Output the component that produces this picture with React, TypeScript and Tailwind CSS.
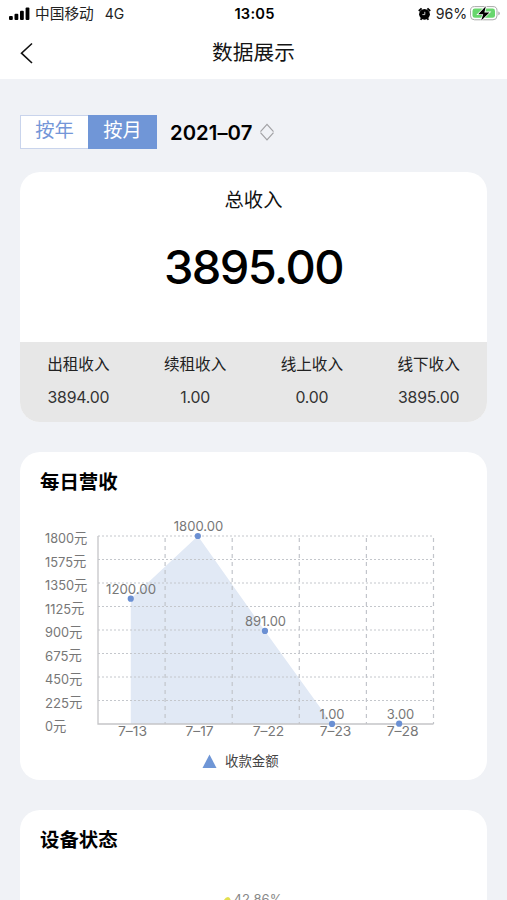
import React from 'react'

const summary = [
  { label: '出租收入', value: '3894.00' },
  { label: '续租收入', value: '1.00' },
  { label: '线上收入', value: '0.00' },
  { label: '线下收入', value: '3895.00' },
]

const daily = [
  { day: '7–13', value: 1200, width: 50, labelX: 131, dayX: 132.5, dayWidth: 29 },
  { day: '7–17', value: 1800, width: 49.5, labelX: 198.5, dayX: 199.5, dayWidth: 28 },
  { day: '7–22', value: 891, width: 41, labelX: 265.5, dayX: 268.5, dayWidth: 31.5 },
  { day: '7–23', value: 1, width: 25, labelX: 332, dayX: 335.5, dayWidth: 31.5 },
  { day: '7–28', value: 3, width: 27.5, labelX: 400.5, dayX: 402.7, dayWidth: 32 },
]

const yLabels = [
  { text: 1800, width: 29 },
  { text: 1575, width: 28 },
  { text: 1350, width: 29 },
  { text: 1125, width: 26 },
  { text: 900, width: 24 },
  { text: 675, width: 23.5 },
  { text: 450, width: 24 },
  { text: 225, width: 24 },
  { text: 0, width: 8 },
]

const LEFT = 98
const RIGHT = 433.5
const TOP = 536
const BOTTOM = 724
const COL = (RIGHT - LEFT) / 5
const ROW = (BOTTOM - TOP) / 8

const StatusBar = () => (
  <div className="flex h-7 items-center pl-2 pr-1.5">
    <div className="flex flex-1 items-center">
      <svg width="22" height="14" viewBox="0 0 22 14">
        <rect x="1" y="9" width="3.8" height="4" rx="1" />
        <rect x="6.5" y="6.7" width="3.8" height="6.3" rx="1" />
        <rect x="12" y="3.8" width="3.8" height="9.2" rx="1" />
        <rect x="17.6" y="0.6" width="3.8" height="12.4" rx="1" />
      </svg>
      <span className="ml-[5px] text-[14.7px] leading-5 text-[#222]">中国移动</span>
      <span className="ml-[11px] text-[14px] leading-5 text-[#222]">4G</span>
    </div>
    <span className="text-[14.7px] font-semibold tracking-[0.2px]">13:05</span>
    <div className="flex flex-1 items-center justify-end">
      <svg width="13" height="14" viewBox="0 0 13 14">
        <path d="M0.8 4 3.6 1.4M12.2 4 9.4 1.4M2.6 12.8l1.2-1.5M10.4 12.8l-1.2-1.5" stroke="#000" strokeWidth="1.8" />
        <circle cx="6.5" cy="7.3" r="5.4" />
        <path d="M6.8 4.8v2.8H4.4" stroke="#ddd" strokeWidth="0.9" fill="none" />
      </svg>
      <span className="ml-[5px] text-[14.2px] tracking-[-0.1px] text-[#222]">96%</span>
      <svg className="ml-[3px]" width="31" height="17" viewBox="0 0 31 17">
        <rect x="0.5" y="1.6" width="26.5" height="13.2" rx="4" fill="#fff" stroke="#a9aaa9" />
        <rect x="2.5" y="3.6" width="22.5" height="9.2" rx="2.4" fill="#68d66d" />
        <path d="M28.3 6.4c2 .6 2 3.3 0 3.9z" fill="#aaa" />
        <path d="M15.8 1.2 8.2 9.2h5l-2 6.2 8.2-8h-5z" stroke="#fff" strokeWidth="1.6" paintOrder="stroke" />
      </svg>
    </div>
  </div>
)

const Header = () => (
  <header className="bg-white">
    <StatusBar />
    <div className="flex h-[51px] items-center px-5 pb-0.5">
      <svg width="14" height="22" viewBox="0 0 14 22" fill="none">
        <path d="M12 1.5 1.5 11.2 12 21" stroke="#111" strokeWidth="1.6" />
      </svg>
      <h1 className="flex-1 text-center text-[20.7px] text-[#151515]">数据展示</h1>
      <div className="w-3.5" />
    </div>
  </header>
)

const RevenueChart = () => {
  const points = daily.map((d, i) => ({
    ...d,
    x: LEFT + COL * (i + 0.5) - 0.8,
    y: BOTTOM - ((BOTTOM - TOP) * d.value) / 1800,
  }))
  const line = points.map((p) => `${p.x},${p.y}`).join(' ')

  return (
    <svg className="block" width="467" height="268" viewBox="20 512 467 268" fontSize="13.3" fill="#777">
      <polygon
        points={`${points[0].x},${BOTTOM} ${line} ${points[4].x},${BOTTOM}`}
        fill="#e1e9f5"
      />
      {yLabels.map((l, i) => (
        <g key={l.text}>
          {i < 8 && (
            <line x1={LEFT} x2={RIGHT} y1={TOP + ROW * i} y2={TOP + ROW * i} stroke="#c4c7cc" strokeDasharray="2 2" />
          )}
          <text x="45" y={543.3 + ROW * i} textLength={l.width} lengthAdjust="spacingAndGlyphs">{l.text}</text>
          <text x={45 + l.width} y={542.5 + ROW * i}>元</text>
        </g>
      ))}
      {points.map((p, i) => (
        <line
          key={p.day}
          x1={LEFT + COL * (i + 1)}
          x2={LEFT + COL * (i + 1)}
          y1={TOP + 2}
          y2={BOTTOM}
          stroke="#c2c5cb"
          strokeWidth="1.2"
          strokeDasharray="4 4"
        />
      ))}
      <path d={`M${LEFT} ${TOP}V${BOTTOM}H${RIGHT}`} fill="none" stroke="#c5c5c8" strokeWidth="1.3" />
      {points.map((p) => (
        <g key={p.day}>
          <circle cx={p.x} cy={p.y} r="3.1" fill="#6b90d3" />
          <text x={p.labelX - p.width / 2} y={p.y - 4.7} textLength={p.width} lengthAdjust="spacingAndGlyphs">
            {p.value.toFixed(2)}
          </text>
          <text x={p.dayX - p.dayWidth / 2} y="736.2" textLength={p.dayWidth} lengthAdjust="spacingAndGlyphs">
            {p.day}
          </text>
        </g>
      ))}
      <path d="M202.5 768 209.5 754.5 216.5 768z" fill="#6f96d6" />
      <text x="225" y="766" fill="#444" fontSize="13.4">收款金额</text>
    </svg>
  )
}

export default function App() {
  return (
    <div className="h-[900px] w-[507px] overflow-hidden bg-[#f0f2f6] font-[Inter,'Noto_Sans_CJK_SC',sans-serif] text-black">
      <Header />
      <main className="px-5 pt-9">
        <div className="flex h-[34px] items-center">
          <div className="flex h-[34px] w-[137px] border border-[#c9d4ec] text-[19.3px] leading-[28px]">
            <button className="w-[67px] bg-white pb-1 text-[#7496d8]">按年</button>
            <button className="-my-px -mr-px flex-1 bg-[#7096d7] pb-1 text-white">按月</button>
          </div>
          <span className="ml-[13px] pt-0.5 text-[20.3px] font-semibold tracking-[0.05px]">2021–07</span>
          <svg className="ml-[7px]" width="16" height="18" viewBox="0 0 16 18" fill="none" stroke="#a2a2a5" strokeWidth="1.2">
            <path d="M1.5 8.7 8 1.4l6.5 7.3M1.5 9.6 8 16.9l6.5-7.3" />
          </svg>
        </div>

        <section className="mt-[23px] h-[250px] overflow-hidden rounded-[20px] bg-white text-center">
          <div className="h-[170px] pt-[13px]">
            <h2 className="text-[19.3px] leading-[30px] text-[#111]">总收入</h2>
            <p className="mt-6 text-[47px] font-medium leading-[56px] tracking-[-1.6px]">3895.00</p>
          </div>
          <div className="grid h-20 grid-cols-4 bg-[#e7e7e7] pt-[11px]">
            {summary.map((item) => (
              <div key={item.label}>
                <p className="text-[15.6px] leading-6 text-[#222]">{item.label}</p>
                <p className="mt-[9px] text-[15.8px] leading-6 tracking-[-0.2px] text-[#333]">{item.value}</p>
              </div>
            ))}
          </div>
        </section>

        <section className="mt-[30px] h-[328px] rounded-[20px] bg-white">
          <h2 className="h-[60px] pl-5 pt-[15px] text-[19.4px] font-bold leading-[30px]">每日营收</h2>
          <RevenueChart />
        </section>

        <section className="mt-[30px] h-[328px] rounded-[20px] bg-white">
          <h2 className="h-[60px] pl-5 pt-[15px] text-[19.4px] font-bold leading-[30px]">设备状态</h2>
          <svg className="block" width="467" height="268" viewBox="20 870 467 268">
            <path d="M223 902q2-5 5-5 2 0 3 4z" fill="#e3df4e" />
            <text x="233.5" y="903.7" fontSize="13.3" fill="#888" textLength="49" lengthAdjust="spacingAndGlyphs">42.86%</text>
          </svg>
        </section>
      </main>
    </div>
  )
}
